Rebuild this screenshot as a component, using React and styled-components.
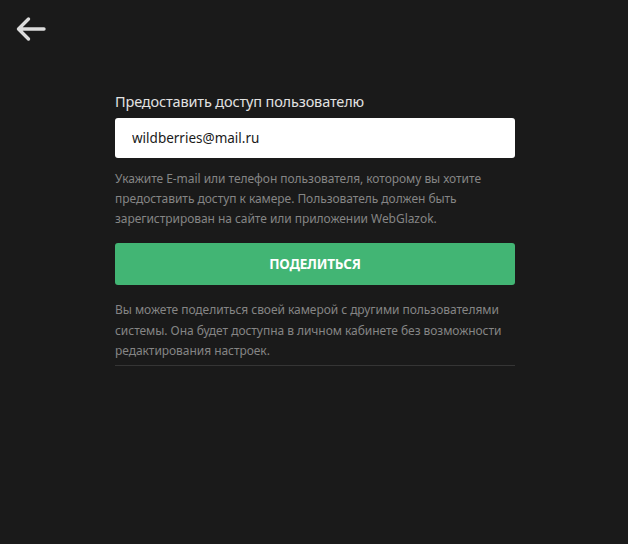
import React, { useState } from 'react'
import styled, { createGlobalStyle } from 'styled-components'

const GlobalStyle = createGlobalStyle`
  html, body {
    margin: 0;
    padding: 0;
    background: #1a1a1a;
  }
  body {
    font-family: 'Noto Sans', 'Open Sans', sans-serif;
  }
`

const Page = styled.div`
  position: relative;
  min-height: 544px;
  background: #1a1a1a;
  display: flex;
  justify-content: center;
  padding: 91px 0 0 2px;
  box-sizing: border-box;
`

const BackButton = styled.button`
  position: absolute;
  left: 14px;
  top: 14px;
  width: 34px;
  height: 30px;
  padding: 0;
  border: none;
  background: transparent;
  cursor: pointer;
  display: flex;
  align-items: center;
  justify-content: center;
`

const Form = styled.div`
  width: 400px;
  display: flex;
  flex-direction: column;
`

const Title = styled.h2`
  margin: 0 0 7px;
  font-size: 14.5px;
  line-height: 20px;
  font-weight: 400;
  color: #e2e2e2;
  letter-spacing: -0.15px;
`

const Input = styled.input`
  height: 40px;
  box-sizing: border-box;
  border: none;
  border-radius: 3px;
  background: #fff;
  padding: 0 17px;
  font-family: inherit;
  font-size: 13.5px;
  color: #1a1a1a;
  outline: none;
`

const Hint = styled.p`
  margin: ${p => p.$top || 0}px 0 0;
  font-size: 12px;
  line-height: ${p => p.$lh || 20}px;
  color: #858585;
  letter-spacing: -0.05px;
`

const ShareButton = styled.button`
  margin-top: 14px;
  height: 42px;
  border: none;
  border-radius: 3px;
  background: #42b574;
  color: #fff;
  font-family: inherit;
  font-size: 13.5px;
  font-weight: 700;
  text-transform: uppercase;
  letter-spacing: -0.2px;
  cursor: pointer;
`

const Divider = styled.hr`
  margin: 3px 0 0;
  border: none;
  border-top: 1px solid #353535;
`

const App = () => {
  const [email, setEmail] = useState('wildberries@mail.ru')

  return (
    <>
      <GlobalStyle />
      <Page>
        <BackButton aria-label="Назад">
          <svg width="32" height="28" viewBox="0 0 32 28" fill="none">
            <path
              d="M29 14H4M13.5 4L3.5 14L13.5 24"
              stroke="#dcdcdc"
              strokeWidth="3.4"
              strokeLinecap="round"
              strokeLinejoin="round"
            />
          </svg>
        </BackButton>
        <Form>
          <Title>Предоставить доступ пользователю</Title>
          <Input value={email} onChange={e => setEmail(e.target.value)} />
          <Hint $top={11}>
            Укажите E-mail или телефон пользователя, которому вы хотите
            предоставить доступ к камере. Пользователь должен быть
            зарегистрирован на сайте или приложении WebGlazok.
          </Hint>
          <ShareButton>Поделиться</ShareButton>
          <Hint $top={15} $lh={20.5}>
            Вы можете поделиться своей камерой с другими пользователями
            системы. Она будет доступна в личном кабинете без возможности
            редактирования настроек.
          </Hint>
          <Divider />
        </Form>
      </Page>
    </>
  )
}

export default App
